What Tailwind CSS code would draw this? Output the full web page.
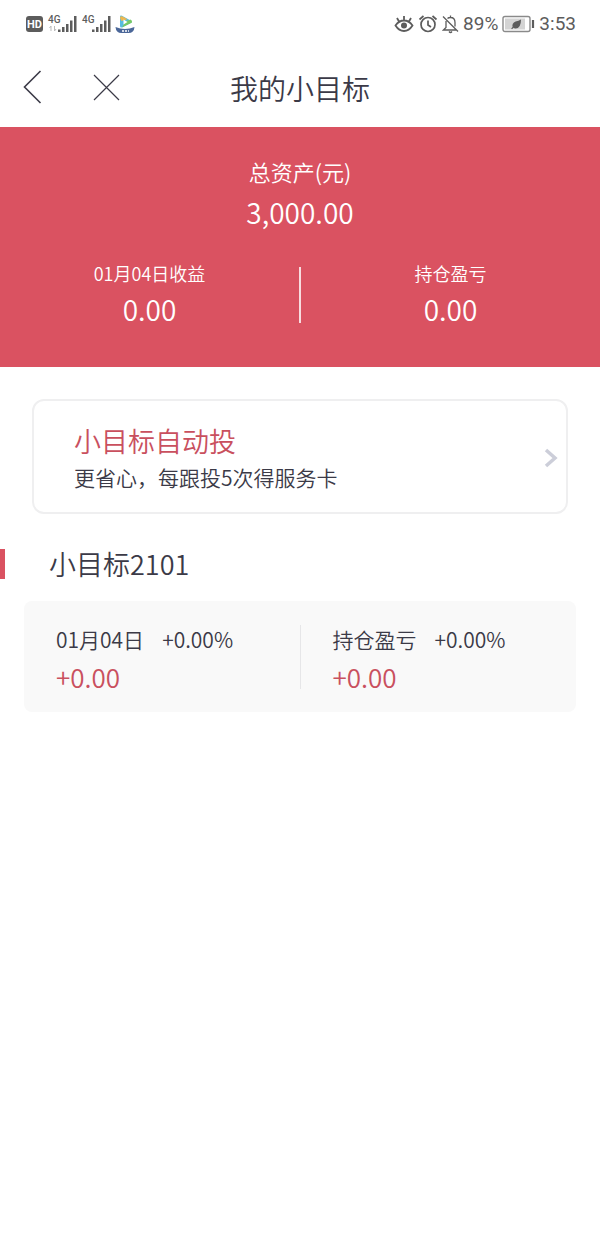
<!DOCTYPE html>
<html lang="zh-CN">
<head>
<meta charset="utf-8">
<meta name="viewport" content="width=device-width, initial-scale=1">
<title>我的小目标</title>
<script src="https://cdn.jsdelivr.net/npm/@tailwindcss/browser@4"></script>
</head>
<body class="min-h-screen bg-white font-['Noto_Sans_CJK_SC',sans-serif] font-[350] text-[#3b3a47]">
<div class="flex h-12 items-center justify-between px-6 font-[Roboto,sans-serif] text-[#5c5c5c]">
  <svg class="h-6 w-28" viewBox="0 0 112 24" fill="currentColor" aria-label="HD 4G 4G">
    <rect x="2" y="4" width="17" height="16" rx="3"/>
    <text x="10.500" y="16" text-anchor="middle" font-size="11" font-weight="700" fill="#fff">HD</text>
    <g id="sig">
      <text x="24" y="11" font-size="10" font-weight="500" font-family="Roboto">4G</text>
      <path d="M34 17.500h2.500v2.500H34zM38 15h2.500v5H38zM42 12h2.500v8H42zM46 8.500h2.500V20H46zM50 4h2.500v16H50z"/>
    </g>
    <use href="#sig" x="34"/>
    <path d="M27 19v-5l-1.500 2M30.500 14v5l1.500-2" fill="none" stroke="#bbb" stroke-width="1"/>
    <path d="M96 5q0-2 2-1.200l9 5q1.500 1.200 0 2.200l-9 4.500q-2 .5-2-1.500z" fill="#58bce0"/>
    <path d="M96 6q0-2.500 2.500-1.500l5 2.800-6 1.700z" fill="#efb84f"/>
    <path d="M98 15.500l10-5q.5-2-1.500-3l-5 2z" fill="#77c966"/>
    <path d="M99.500 7.500l4 2.500-4 2.500z" fill="#fff"/>
    <path d="M91.500 15q9.500 4 19 0-.5 6-6 6h-7q-5.500 0-6-6z" fill="#4b6799"/>
    <path d="M98 19h2M101 19h2M104 19h1" stroke="#fff" stroke-width="1.300"/>
  </svg>
  <div class="flex items-center gap-1 text-[19px] leading-6 font-normal">
    <svg class="h-5 w-5" viewBox="0 0 20 20" fill="none" stroke="currentColor" stroke-width="1.800" aria-hidden="true">
      <path d="M1.500 11.500Q5 6.500 10 6.500t8.500 5Q15 17 10 17t-8.500-5.500zM10 6V2M5 7.500L3 4M15 7.500L17 4"/>
      <circle cx="10" cy="11.500" r="3" fill="currentColor" stroke="none"/>
    </svg>
    <svg class="h-5 w-5" viewBox="0 0 20 20" fill="none" stroke="currentColor" stroke-width="1.700" aria-hidden="true">
      <circle cx="10" cy="10.500" r="7"/><path d="M10 6.500v4.500l3 2M1.500 5.500L5.500 2M18.500 5.500L14.500 2"/>
    </svg>
    <svg class="h-5 w-[17px]" viewBox="0 0 17 20" fill="none" stroke="currentColor" stroke-width="1.300" aria-hidden="true">
      <path d="M5.500 4.500Q6.500 3.500 8.500 3.500 13 3.500 13 8.500v4M8.500 3.500V1.500M4 7v6.500L1.500 16H14M1 2.500l15 15M7 17.500q1.500 2 3 0"/>
    </svg>
    <span>89%</span>
    <svg class="h-5 w-[33px]" viewBox="0 0 33 20" fill="none" aria-hidden="true">
      <rect x="1" y="2.500" width="27" height="15" rx="2" stroke="#8a8a8a" stroke-width="1.400"/>
      <rect x="3" y="4.500" width="20" height="11" fill="#d4d4d4"/>
      <path d="M31 6v8" stroke="currentColor" stroke-width="2.200"/>
      <path d="M19 5.500q0 9-5.500 9-1.200 0-2-.7L10 15.200l-.8-.7 1.400-1.500q-1-4 3-5.500 3-.5 5.400-2z" fill="currentColor"/>
    </svg>
    <time>3:53</time>
  </div>
</div>

<header class="grid h-[79px] grid-cols-[1fr_auto_1fr] items-center px-5">
  <nav class="flex items-center gap-12">
    <button type="button" aria-label="返回" class="h-9 w-6">
      <svg class="h-9 w-6" viewBox="0 0 24 36" fill="none" stroke="currentColor" stroke-width="1.600"><path d="M20.500 1L4.500 17l16 16"/></svg>
    </button>
    <button type="button" aria-label="关闭" class="h-7 w-7">
      <svg class="h-7 w-7" viewBox="0 0 28 28" fill="none" stroke="currentColor" stroke-width="1.200"><path d="M2 1l25 25M27 1L2 26"/></svg>
    </button>
  </nav>
  <h1 class="text-[28px] leading-10">我的小目标</h1>
</header>

<main>
  <section class="bg-[#da5261] pt-[26px] pb-9 text-center text-white">
    <h2 class="text-[22px] leading-9">总资产(元)</h2>
    <p class="text-[28px] leading-[46px]">3,000.00</p>
    <div class="mt-6 flex items-center">
      <div class="flex-1">
        <h3 class="text-lg leading-7">01月04日收益</h3>
        <p class="text-[28px] leading-11">0.00</p>
      </div>
      <div class="h-14 w-0.5 bg-white/80"></div>
      <div class="flex-1">
        <h3 class="text-lg leading-7">持仓盈亏</h3>
        <p class="text-[28px] leading-11">0.00</p>
      </div>
    </div>
  </section>

  <a href="#auto" class="mx-8 mt-8 flex items-center justify-between rounded-xl border-2 border-[#efeff0] pt-5 pb-[18px] pr-2 pl-10">
    <div>
      <h2 class="text-[27px] leading-10 text-[#c9505e]">小目标自动投</h2>
      <p class="text-[21px] leading-[33px]">更省心，每跟投5次得服务卡</p>
    </div>
    <svg class="h-5 w-4" viewBox="0 0 16 20" fill="none" stroke="#ccced9" stroke-width="3.500" aria-hidden="true"><path d="M4 2l9 8-9 8"/></svg>
  </a>

  <section>
    <div class="mt-7 flex items-center gap-11">
      <div class="h-[30px] w-[5px] bg-[#da5261]"></div>
      <h2 class="text-[27px] leading-11">小目标2101</h2>
    </div>
    <div class="mx-6 mt-[15px] flex items-start rounded-lg bg-[#f9f9f9] pt-5 pb-4">
      <div class="flex-1 pl-8">
        <h3 class="flex gap-[18px] text-[21px] leading-9"><span>01月04日</span><span>+0.00%</span></h3>
        <p class="text-[26px] leading-[39px] text-[#c9505e]">+0.00</p>
      </div>
      <div class="mt-1 h-16 w-px bg-[#e6e6e8]"></div>
      <div class="flex-1 pl-8">
        <h3 class="flex gap-[18px] text-[21px] leading-9"><span>持仓盈亏</span><span>+0.00%</span></h3>
        <p class="text-[26px] leading-[39px] text-[#c9505e]">+0.00</p>
      </div>
    </div>
  </section>
</main>
</body>
</html>
